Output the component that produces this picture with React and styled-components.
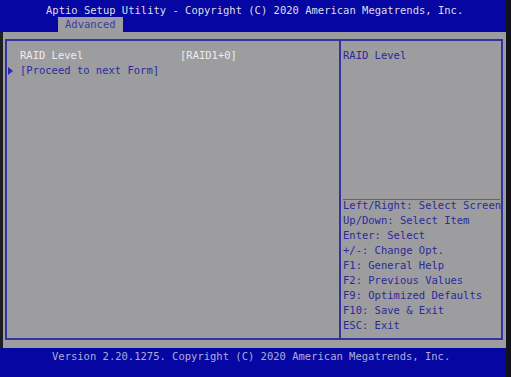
import React from 'react';
import styled, { createGlobalStyle } from 'styled-components';

const GlobalStyle = createGlobalStyle`
  html, body {
    margin: 0;
    padding: 0;
    background: #121218;
  }
  * {
    box-sizing: border-box;
  }
`;

const Screen = styled.div`
  width: 511px;
  height: 377px;
  display: flex;
  flex-direction: column;
  padding-right: 5px;
  background: #121218;
  font-family: "DejaVu Sans Mono", "Liberation Mono", monospace;
  font-size: 10.5px;
  overflow: hidden;
`;

const Header = styled.div`
  height: 32px;
  background: #0606a2;
  display: flex;
  flex-direction: column;
`;

const Title = styled.div`
  height: 17px;
  padding: 3px 0 0 46px;
  line-height: 14px;
  color: #dedee6;
  white-space: pre;
`;

const TabBar = styled.div`
  height: 15px;
  display: flex;
  padding-left: 58px;
`;

const Tab = styled.div`
  height: 15px;
  padding: 0 7px;
  line-height: 15px;
  background: #9d9d9f;
  color: #3a3aa6;
`;

const Main = styled.div`
  flex: 1;
  background: #9d9d9f;
  border-left: 3px solid #1e1e22;
  padding: 7px 3px 8px 2px;
  display: flex;
`;

const Panel = styled.div`
  flex: 1;
  display: grid;
  grid-template-columns: 332px 1fr;
  border: 2px solid #3232a0;
`;

const SettingsList = styled.div`
  padding-top: 7px;
  display: flex;
  flex-direction: column;
`;

const Row = styled.div`
  display: grid;
  grid-template-columns: 13px 160px auto;
  height: 15px;
  line-height: 15px;
  color: ${p => (p.link ? '#2a2aa4' : '#ececf0')};
  white-space: pre;
`;

const Marker = styled.span`
  display: flex;
  align-items: center;
  padding-left: 1px;
`;

const HelpColumn = styled.div`
  border-left: 2px solid #3232a0;
  padding-left: 2px;
  display: flex;
  flex-direction: column;
  color: #2a2a9c;
`;

const HelpTitle = styled.div`
  flex: 1;
  padding-top: 7px;
  line-height: 15px;
`;

const Separator = styled.div`
  height: 1px;
  margin: 0 1px -2px 0;
  background: #5c5ca2;
`;

const KeyList = styled.div`
  padding-bottom: 5px;
`;

const KeyLine = styled.div`
  height: 15px;
  line-height: 15px;
  white-space: pre;
`;

const Footer = styled.div`
  height: 29px;
  background: #0606a2;
  padding: 1px 0 0 52px;
  line-height: 14px;
  color: #aeaed6;
  white-space: pre;
`;

const keys = [
  'Left/Right: Select Screen',
  'Up/Down: Select Item',
  'Enter: Select',
  '+/-: Change Opt.',
  'F1: General Help',
  'F2: Previous Values',
  'F9: Optimized Defaults',
  'F10: Save & Exit',
  'ESC: Exit',
];

const Arrow = () => (
  <svg width="5" height="8" viewBox="0 0 5 8">
    <polygon points="0,0 5,4 0,8" fill="#2a2ab0" />
  </svg>
);

const App = () => (
  <Screen>
    <GlobalStyle />
    <Header>
      <Title>Aptio Setup Utility - Copyright (C) 2020 American Megatrends, Inc.</Title>
      <TabBar>
        <Tab>Advanced</Tab>
      </TabBar>
    </Header>
    <Main>
      <Panel>
        <SettingsList>
          <Row>
            <span />
            <span>RAID Level</span>
            <span>[RAID1+0]</span>
          </Row>
          <Row link>
            <Marker>
              <Arrow />
            </Marker>
            <span>[Proceed to next Form]</span>
            <span />
          </Row>
        </SettingsList>
        <HelpColumn>
          <HelpTitle>RAID Level</HelpTitle>
          <Separator />
          <KeyList>
            {keys.map(k => (
              <KeyLine key={k}>{k}</KeyLine>
            ))}
          </KeyList>
        </HelpColumn>
      </Panel>
    </Main>
    <Footer>Version 2.20.1275. Copyright (C) 2020 American Megatrends, Inc.</Footer>
  </Screen>
);

export default App;
